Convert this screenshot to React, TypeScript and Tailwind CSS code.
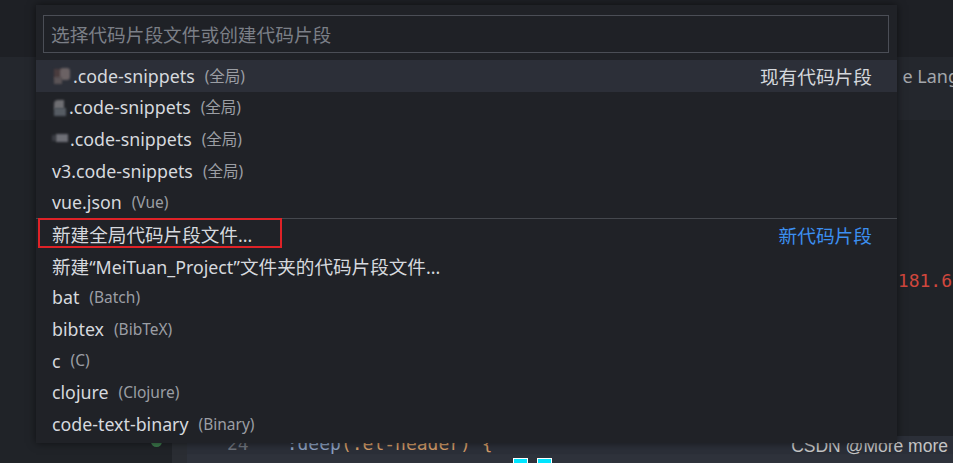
import React from "react";

const FONT = '"Noto Sans", "Noto Sans CJK SC", sans-serif';

type Row = {
  label: string;
  desc?: string;
  right?: string;
  rightBlue?: boolean;
  icon?: number;
  active?: boolean;
  sep?: boolean;
  boxed?: boolean;
};

function Mixed({ text, big }: { text: string; big?: boolean }) {
  const parts = text.match(/[\u3400-\u9fff\uff00-\uffef]+|[^\u3400-\u9fff\uff00-\uffef]+/g) || [];
  return (
    <>
      {parts.map((p, i) =>
        /[\u3400-\u9fff]/.test(p) ? (
          <span
            key={i}
            className={big ? "text-[18.6px]" : "text-[15.5px]"}
            style={{ fontFamily: '"Noto Sans CJK SC", sans-serif' }}
          >
            {p}
          </span>
        ) : (
          <span key={i} style={{ fontFamily: '"Noto Sans", sans-serif' }}>
            {p}
          </span>
        )
      )}
    </>
  );
}

function BlurIcon({ kind }: { kind: number }) {
  if (kind === 1)
    return (
      <span className="relative mr-[1px] inline-block h-[18px] w-[20px] shrink-0">
        <span className="absolute left-[2px] top-[2px] h-[10px] w-[8px] bg-[#4a3c3e] blur-[1px]" />
        <span className="absolute left-[8px] top-[1px] h-[12px] w-[10px] rounded-[3px] bg-[#6b6264] blur-[1px]" />
        <span className="absolute left-[2px] top-[10px] h-[7px] w-[8px] bg-[#5a5356] blur-[1px]" />
      </span>
    );
  if (kind === 2)
    return (
      <span className="relative inline-block h-[18px] w-[17px] shrink-0">
        <span className="absolute left-[2px] top-[1px] h-[9px] w-[10px] rounded-tl-[4px] bg-[#6e6e72] blur-[1px]" />
        <span className="absolute left-[2px] top-[9px] h-[8px] w-[12px] bg-[#565c63] blur-[1px]" />
      </span>
    );
  return (
    <span className="relative inline-block h-[18px] w-[18px] shrink-0">
      <span className="absolute left-[0px] top-[5px] h-[6px] w-[4px] bg-[#3b3d44] blur-[1px]" />
      <span className="absolute left-[4px] top-[4px] h-[8px] w-[12px] bg-[#6e6f76] blur-[1px]" />
    </span>
  );
}

const rows: Row[] = [
  { label: ".code-snippets", desc: "(全局)", right: "现有代码片段", icon: 1, active: true },
  { label: ".code-snippets", desc: "(全局)", icon: 2 },
  { label: ".code-snippets", desc: "(全局)", icon: 3 },
  { label: "v3.code-snippets", desc: "(全局)" },
  { label: "vue.json", desc: "(Vue)" },
  { label: "新建全局代码片段文件...", right: "新代码片段", rightBlue: true, sep: true, boxed: true },
  { label: "新建“MeiTuan_Project”文件夹的代码片段文件..." },
  { label: "bat", desc: "(Batch)" },
  { label: "bibtex", desc: "(BibTeX)" },
  { label: "c", desc: "(C)" },
  { label: "clojure", desc: "(Clojure)" },
  { label: "code-text-binary", desc: "(Binary)" },
];

export default function App() {
  return (
    <div
      className="relative h-[463px] w-[953px] overflow-hidden bg-[#202328]"
      style={{ fontFamily: FONT }}
    >
      {/* editor background */}
      <div className="flex h-full flex-col">
        <div className="h-[57px] bg-[#1e2025]" />
        <div className="flex h-[63px] items-start justify-end bg-[#24272d]">
          <span className="mr-[-6px] mt-[6px] text-[18px] text-[#a3a6ab]">e Lang</span>
        </div>
        <div className="flex flex-1 flex-col bg-[#202328]">
          <div className="flex h-[173px] items-end justify-end">
            <span
              className="mr-[1px] text-[18px] leading-[24px] text-[#d0473d]"
              style={{ fontFamily: '"DejaVu Sans Mono", monospace' }}
            >
              181.6
            </span>
          </div>
          <div className="flex-1" />
          <div className="flex h-[27px] items-start">
            <div className="w-[151px]" />
            <span className="mt-[0px] h-[11px] w-[11px] rounded-full bg-[#3c7a4c]" />
            <div className="ml-[10px] h-full w-[15px] bg-[#2a2d33]" />
            <div className="flex h-full flex-1 flex-col">
              <div className="flex h-[18px] items-start bg-[#2b2f38]">
                <span
                  className="ml-[40px] mt-[-4px] text-[18px] leading-[24px] text-[#6e737c]"
                  style={{ fontFamily: '"DejaVu Sans Mono", monospace' }}
                >
                  24
                </span>
                <span
                  className="ml-[38px] mt-[-4px] text-[18px] leading-[24px] text-[#d19a66]"
                  style={{ fontFamily: '"DejaVu Sans Mono", monospace' }}
                >
                  <span className="text-[#8ba0c0]">:deep</span>(.el-header) {"{"}
                </span>
              </div>
              <div className="flex flex-1 items-end bg-[#2e323b]">
                <span className="ml-[326px] h-[5px] w-[15px] border border-b-0 border-white bg-[#00e5ff]" />
                <span className="ml-[9px] h-[5px] w-[15px] border border-b-0 border-white bg-[#00e5ff]" />
              </div>
            </div>
          </div>
        </div>
      </div>

      {/* watermark */}
      <div
        className="absolute bottom-[7px] right-[5px] text-[17.5px] leading-[20px] text-[#c4c4c4]"
        style={{ fontFamily: '"Liberation Sans", Arial, sans-serif' }}
      >
        CSDN @More more
      </div>

      {/* quick pick */}
      <div className="absolute left-[36px] top-[5px] flex h-[438px] w-[861px] flex-col bg-[#202227] shadow-[0_0_8px_rgba(0,0,0,0.55)]">
        <div className="px-[7px] pt-[10px]">
          <div
            className="flex h-[38px] w-[846px] items-center border border-[#4b4e56] bg-[#1f2126] pl-[7px] text-[18.7px] text-[#7b7f87]"
            style={{ fontFamily: '"Noto Sans CJK SC", sans-serif' }}
          >
            选择代码片段文件或创建代码片段
          </div>
        </div>
        <div className="mt-[7px] flex flex-col">
          {rows.map((r, i) => (
            <div
              key={i}
              className={
                "relative flex h-[31.7px] items-center pl-[16px] pr-[25px] " +
                (r.active ? "bg-[#2c2f38] " : "") +
                (r.sep ? "border-t border-[#45484e] " : "")
              }
            >
              {r.icon ? <BlurIcon kind={r.icon} /> : null}
              <span className="whitespace-nowrap text-[17.8px] text-[#d6d9de]">
                <Mixed text={r.label} big />
              </span>
              {r.desc ? (
                <span className="ml-[10px] whitespace-nowrap text-[15.5px] text-[#9b9ea4]">
                  <Mixed text={r.desc} />
                </span>
              ) : null}
              <div className="flex-1" />
              {r.right ? (
                <span
                  className={
                    "whitespace-nowrap text-[18.7px] " +
                    (r.rightBlue ? "text-[#3c8ff0]" : "text-[#d4d7dc]")
                  }
                  style={{ fontFamily: '"Noto Sans CJK SC", sans-serif' }}
                >
                  {r.right}
                </span>
              ) : null}
              {r.boxed ? (
                <div className="pointer-events-none absolute left-[2px] top-[-1px] h-[30px] w-[244px] border-2 border-[#df2227]" />
              ) : null}
            </div>
          ))}
        </div>
      </div>
    </div>
  );
}
